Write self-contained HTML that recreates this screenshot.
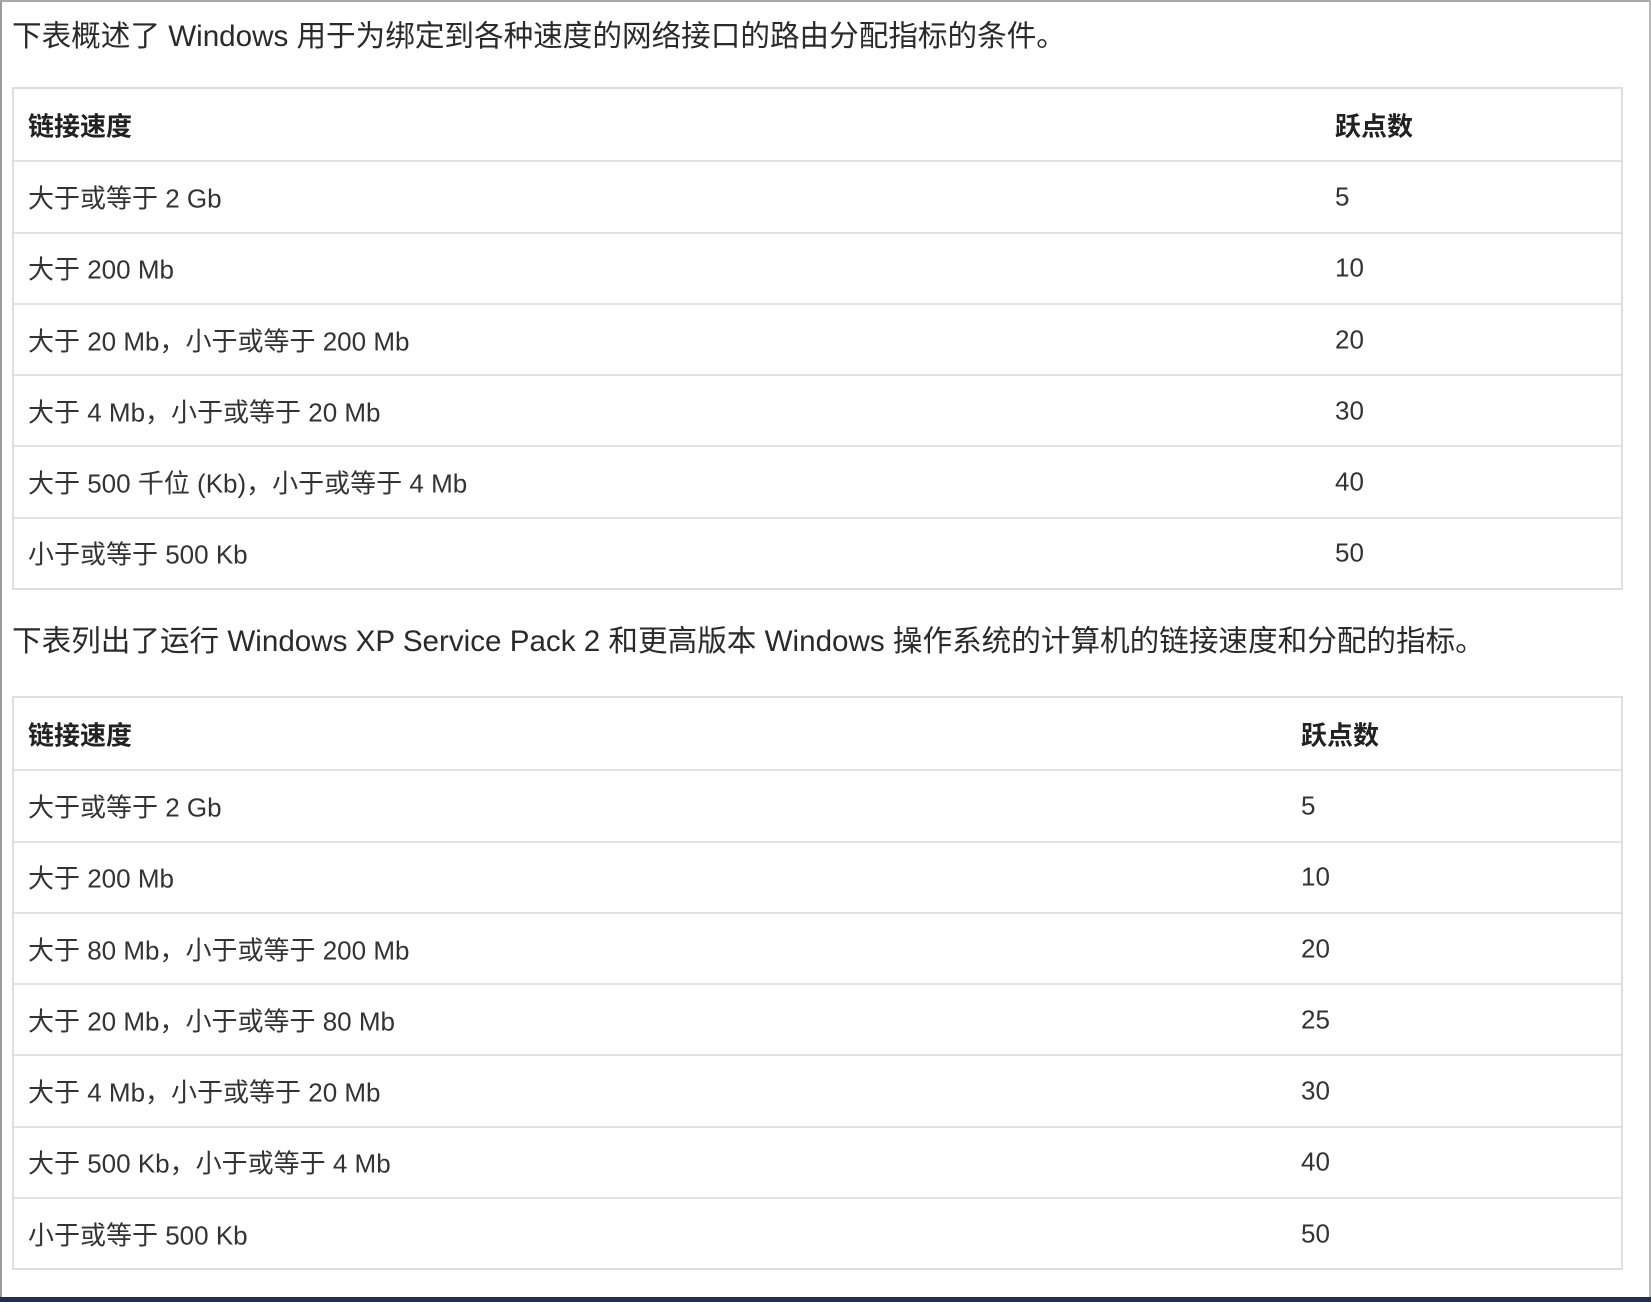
<!DOCTYPE html>
<html><head><meta charset="utf-8"><style>
html,body{margin:0;padding:0;background:#fff;}
body{width:1651px;height:1302px;position:relative;overflow:hidden;font-family:"Liberation Sans","Noto Sans CJK SC",sans-serif;color:#333;}
.edgeL{position:absolute;left:0;top:0;width:2px;height:1302px;background:#9a9a9a;}
.edgeT{position:absolute;left:0;top:0;width:1651px;height:2px;background:#a8a8a8;}
.edgeR{position:absolute;right:0;top:0;width:2px;height:1302px;background:#b8b8b8;}
.bot{position:absolute;left:0;top:1297px;width:1651px;height:5px;background:#1e3050;}
.p{position:absolute;left:12px;font-size:29.6px;color:#2a2a2a;white-space:nowrap;line-height:40px;}
.t{position:absolute;left:12px;width:1607px;border:2px solid #dedede;box-sizing:content-box;}
.r{height:71.3px;position:relative;border-top:2px solid #e2e2e2;box-sizing:border-box;font-size:26px;white-space:nowrap;}
.r:first-child{border-top:none;}
.r span{position:absolute;top:50%;transform:translateY(-50%);}
.a{left:14px;}
.h{font-weight:bold;color:#222;}
</style></head><body>
<div class="edgeL"></div><div class="edgeT"></div><div class="edgeR"></div>
<div class="p" style="top:17px;">下表概述了 Windows 用于为绑定到各种速度的网络接口的路由分配指标的条件。</div>
<div class="t" style="top:87px;">
<div class="r h"><span class="a">链接速度</span><span style="left:1321px">跃点数</span></div>
<div class="r"><span class="a">大于或等于 2 Gb</span><span style="left:1321px">5</span></div>
<div class="r"><span class="a">大于 200 Mb</span><span style="left:1321px">10</span></div>
<div class="r"><span class="a">大于 20 Mb，小于或等于 200 Mb</span><span style="left:1321px">20</span></div>
<div class="r"><span class="a">大于 4 Mb，小于或等于 20 Mb</span><span style="left:1321px">30</span></div>
<div class="r"><span class="a">大于 500 千位 (Kb)，小于或等于 4 Mb</span><span style="left:1321px">40</span></div>
<div class="r"><span class="a">小于或等于 500 Kb</span><span style="left:1321px">50</span></div>
</div>
<div class="p" style="top:622px;">下表列出了运行 Windows XP Service Pack 2 和更高版本 Windows 操作系统的计算机的链接速度和分配的指标。</div>
<div class="t" style="top:696px;">
<div class="r h"><span class="a">链接速度</span><span style="left:1287px">跃点数</span></div>
<div class="r"><span class="a">大于或等于 2 Gb</span><span style="left:1287px">5</span></div>
<div class="r"><span class="a">大于 200 Mb</span><span style="left:1287px">10</span></div>
<div class="r"><span class="a">大于 80 Mb，小于或等于 200 Mb</span><span style="left:1287px">20</span></div>
<div class="r"><span class="a">大于 20 Mb，小于或等于 80 Mb</span><span style="left:1287px">25</span></div>
<div class="r"><span class="a">大于 4 Mb，小于或等于 20 Mb</span><span style="left:1287px">30</span></div>
<div class="r"><span class="a">大于 500 Kb，小于或等于 4 Mb</span><span style="left:1287px">40</span></div>
<div class="r"><span class="a">小于或等于 500 Kb</span><span style="left:1287px">50</span></div>
</div>
<div class="bot"></div>
</body></html>
